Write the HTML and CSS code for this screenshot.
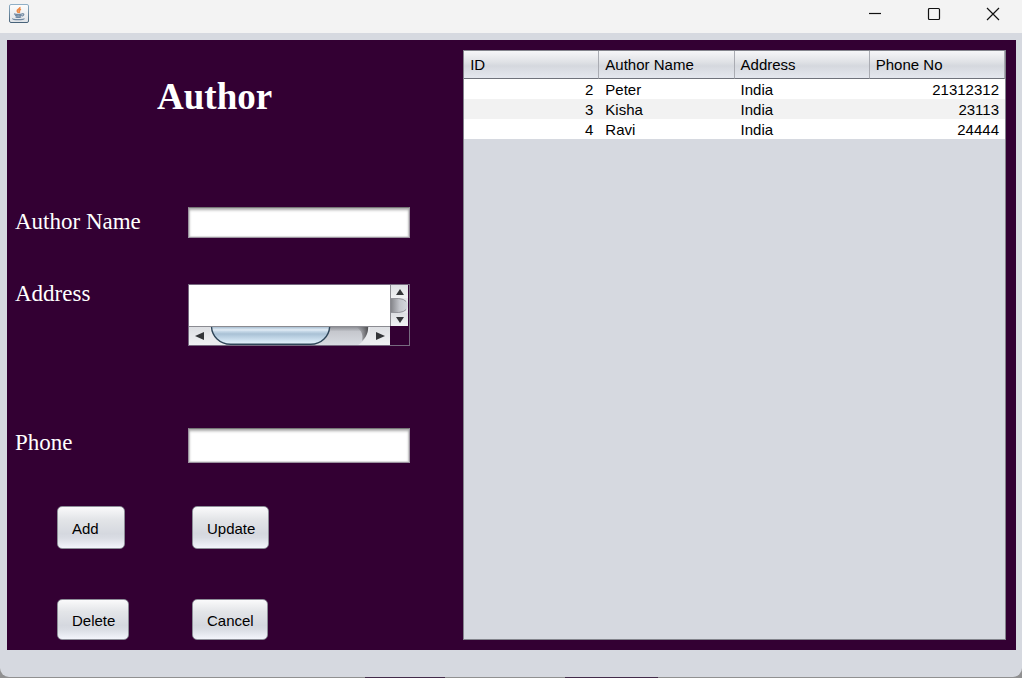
FILE: index.html
```html
<!DOCTYPE html>
<html lang="en">
<head>
<meta charset="utf-8">
<title>Author</title>
<link rel="stylesheet" href="styles.css">
</head>
<body>
<div class="window">
  <header class="titlebar">
    <svg class="app-icon" viewBox="0 0 20 20" aria-hidden="true">
      <defs>
        <linearGradient id="tile" x1="0" y1="0" x2="0" y2="1"><stop offset="0" stop-color="#fdfdfd"/><stop offset="1" stop-color="#dfe3e7"/></linearGradient>
        <linearGradient id="edge" x1="0" y1="0" x2="0" y2="1"><stop offset="0" stop-color="#8fafc6"/><stop offset="1" stop-color="#48637a"/></linearGradient>
      </defs>
      <rect x=".5" y=".5" width="19" height="18" rx="1.5" fill="url(#tile)" stroke="url(#edge)"/>
      <path d="M10.900 3c.7 1.700-3.100 2.500-2.700 4 .2.700 1 1.100 1 2M12 5.300c-1.500.6-2.300 1.300-1.700 2 .5.600.5 1-.2 1.600" fill="none" stroke="#ee8a45" stroke-width="1.500"/>
      <path d="M5 9.800c2.500.7 6 .7 8.500 0M6 11.300c2 .6 4.700.6 6.700 0M6.500 12.900c1.600.6 4.100.6 5.700 0M13.500 9.700c2-.4 1.600 2-.7 2.400M4 14.500c-.8.600 1 1.200 5.300 1.200 3.600 0 6-.5 5.700-1.300" fill="none" stroke="#7089a2" stroke-width="1.200"/>
    </svg>
    <div class="window-controls">
      <button type="button" aria-label="Minimize"><svg viewBox="0 0 14 14"><path d="M1 6.500h12"/></svg></button>
      <button type="button" aria-label="Maximize"><svg viewBox="0 0 14 14"><rect x="1.500" y="1.500" width="11" height="11" rx="1"/></svg></button>
      <button type="button" aria-label="Close"><svg viewBox="0 0 14 14"><path d="M1 1l12 12M13 1L1 13"/></svg></button>
    </div>
  </header>
  <main class="panel">
    <form class="author-form">
      <h1>Author</h1>
      <div class="fields">
        <label for="name">Author Name</label>
        <input id="name" class="name-box" type="text">
        <label for="address">Address</label>
        <div class="scroll-pane">
          <textarea id="address"></textarea>
          <div class="scroll-v">
            <button type="button" aria-label="Scroll up"><svg width="8" height="6" viewBox="0 0 8 6"><path d="M4 0l4 6H0z"/></svg></button>
            <svg class="track" viewBox="0 0 18 15" preserveAspectRatio="none" aria-hidden="true">
              <defs><linearGradient id="vt"><stop offset="0" stop-color="#85868b"/><stop offset=".5" stop-color="#c3c5cb"/><stop offset="1" stop-color="#d6d9df"/></linearGradient></defs>
              <path d="M0 0h18v15H0z" fill="#e6e7eb"/>
              <path d="M0 0h8q10 1 10 7.500T8 15H0z" fill="url(#vt)"/>
              <path d="M0 .5h8q6 .5 8 3M0 14.500h8q6-.5 8-3" fill="none" stroke="#94959b"/>
            </svg>
            <button type="button" aria-label="Scroll down"><svg width="8" height="6" viewBox="0 0 8 6"><path d="M0 0h8L4 6z"/></svg></button>
          </div>
          <div class="scroll-h">
            <button type="button" aria-label="Scroll left"><svg width="9" height="8" viewBox="0 0 9 8"><path d="M9 0v8L0 4z"/></svg></button>
            <svg class="track" viewBox="0 0 160 18" preserveAspectRatio="none" aria-hidden="true">
              <defs>
                <linearGradient id="thumb" x1="0" y1="0" x2="0" y2="1"><stop offset="0" stop-color="#a8bed1"/><stop offset=".17" stop-color="#e3edf6"/><stop offset=".25" stop-color="#c7d9e8"/><stop offset=".4" stop-color="#a9c1d5"/><stop offset=".75" stop-color="#cde0ef"/><stop offset="1" stop-color="#e6f4fd"/></linearGradient>
                <linearGradient id="ht" x1="0" y1="0" x2="0" y2="1"><stop offset="0" stop-color="#8e9096"/><stop offset=".25" stop-color="#c5c7cd"/><stop offset="1" stop-color="#d8dbe1"/></linearGradient>
                <linearGradient id="shade"><stop offset="0" stop-color="#77777a" stop-opacity="0"/><stop offset="1" stop-color="#4d4d50"/></linearGradient>
              </defs>
              <path d="M0 0h160v18H0z" fill="#e9ebee"/>
              <path d="M20 0h138c0 8-4 14-10 18H20z" fill="url(#ht)"/>
              <path d="M146 0h12c0 6-2 10-6 14 1-6 0-10-6-14z" fill="url(#shade)"/>
              <path d="M1.500 0c.5 9 8 17.300 19 17.300h80c11 0 18.500-8.300 19-17.300z" fill="url(#thumb)"/>
              <path d="M1.500 0c.5 9 8 17.300 19 17.300h80c11 0 18.500-8.300 19-17.300" fill="none" stroke="#2e4558" stroke-width="1.400"/>
            </svg>
            <button type="button" aria-label="Scroll right"><svg width="9" height="8" viewBox="0 0 9 8"><path d="M0 0v8l9-4z"/></svg></button>
          </div>
        </div>
        <label for="phone">Phone</label>
        <input id="phone" class="phone-box" type="text">
      </div>
      <div class="actions">
        <button type="button">Add</button>
        <button type="button">Update</button>
        <button type="button">Delete</button>
        <button type="button">Cancel</button>
      </div>
    </form>
    <section class="table-pane">
      <table>
        <thead><tr><th>ID</th><th>Author Name</th><th>Address</th><th>Phone No</th></tr></thead>
        <tbody>
          <tr><td class="num">2</td><td>Peter</td><td>India</td><td class="num">21312312</td></tr>
          <tr><td class="num">3</td><td>Kisha</td><td>India</td><td class="num">23113</td></tr>
          <tr><td class="num">4</td><td>Ravi</td><td>India</td><td class="num">24444</td></tr>
        </tbody>
      </table>
    </section>
  </main>
</div>
</body>
</html>
```
FILE: styles.css
```css
* { box-sizing: border-box; }

body {
  margin: 0;
  min-height: 100vh;
  display: flex;
  background: linear-gradient(90deg, #909091 365px, #432b49 365px 445px, #909091 445px 565px, #432b49 565px 658px, #909091 658px);
  font: 15px/20px "Liberation Sans", Arial, sans-serif;
  color: #000;
}

button, input, textarea { font: inherit; color: inherit; margin: 0; }

.window {
  flex: 1;
  display: flex;
  flex-direction: column;
  margin-bottom: 1px;
  padding-bottom: 27px;
  background: #d6d9e0;
  border-radius: 0 0 9px 9px;
}

.titlebar {
  display: flex;
  justify-content: space-between;
  height: 33px;
  background: #f3f3f3;
}

.app-icon { width: 20px; height: 20px; margin: 4px 0 0 9px; }

.window-controls { display: flex; }
.window-controls button {
  width: 59px;
  height: 28px;
  padding: 0;
  border: 0;
  background: none;
  display: flex;
  align-items: center;
  justify-content: center;
}
.window-controls svg { width: 14px; height: 14px; fill: none; stroke: #111; stroke-width: 1.2; }

.panel {
  flex: 1;
  display: flex;
  margin: 7px 6px 0 7px;
  padding: 10px 10px 10px 8px;
  background: #330033;
}

.author-form { flex: 396; padding-top: 25px; }

h1 {
  margin: 0;
  padding-left: 4px;
  text-align: center;
  font: bold 37px/44px "Liberation Serif", "Times New Roman", serif;
  color: #fff;
}

.fields {
  display: grid;
  grid-template-columns: 173px 1fr;
  grid-template-rows: 31px 63px 35px;
  row-gap: 46px;
  margin-top: 88px;
}
.fields label {
  font: 23px/30px "Liberation Serif", "Times New Roman", serif;
  color: #fff;
}
.fields label[for="address"] { line-height: 20px; }
.fields input, .scroll-pane { min-width: 0; width: 100%; }
.fields input {
  border: 1px solid #9b929f;
  border-top-color: #777;
  padding: 0 6px;
  background: #fff;
  box-shadow: inset 0 2px 3px #aaa, inset 0 0 1px 1px #ddd;
}
.fields label[for="phone"], .phone-box { margin-top: 35px; }
.phone-box { height: 35px; }

.scroll-pane {
  display: grid;
  grid-template-columns: 1fr 18px;
  grid-template-rows: 41px 19px;
  align-self: start;
  border: 1px solid #776a80;
  padding: 0 1px 0 0;
}
.scroll-pane textarea {
  min-width: 0;
  width: 100%;
  height: 100%;
  padding: 4px 6px;
  border: 0;
  resize: none;
  overflow: hidden;
  background: #fff;
}
.scroll-v { display: grid; grid-template-rows: 13px 15px 13px; border-left: 1px solid #8b8b91; }
.scroll-h { display: grid; grid-template-columns: 21px 1fr 20px; border-top: 1px solid #8b8b91; min-width: 0; }
.scroll-pane button {
  display: flex;
  align-items: center;
  justify-content: center;
  padding: 0;
  border: 0;
  background: linear-gradient(#dddfe3, #f1f2f4);
}
.scroll-pane button path { fill: #333538; }
.track { display: block; width: 100%; height: 100%; min-width: 0; }

.actions {
  display: grid;
  grid-template-columns: 135px auto;
  grid-template-rows: 43px 41px;
  row-gap: 50px;
  margin: 78px 0 0 42px;
  justify-items: start;
}
.actions button {
  min-width: 68px;
  height: 100%;
  padding: 2px 13px 0 14px;
  text-align: left;
  border: 1px solid #8d8e98;
  border-radius: 5px;
  background: linear-gradient(#fafafb, #e3e5e8 30%, #d5d8df 65%, #d9dce3 75%, #f3f5fc);
}

.table-pane {
  flex: 542;
  margin-left: 53px;
  border: 1px solid #83848c;
  background: #d6d9e0;
}
table { width: 100%; table-layout: fixed; border-collapse: separate; border-spacing: 0; }
th, td { padding: 0 6px; font-weight: normal; text-align: left; }
th {
  height: 28px;
  border-right: 1px solid #a9abb2;
  border-bottom: 1px solid #6f727b;
  background: linear-gradient(#f6f6f8, #e0e2e6 40%, #d5d8de 55%, #e4e7ee);
}
td { height: 20px; padding-top: 2px; line-height: 18px; background: #fff; }
tbody tr:nth-child(even) td { background: #f2f2f2; }
.num { text-align: right; }
```
